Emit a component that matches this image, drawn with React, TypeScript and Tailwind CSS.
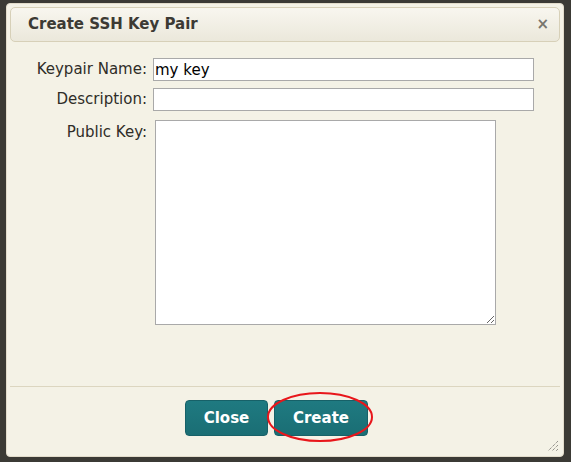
import { useState } from "react";

export default function App() {
  const [name, setName] = useState("my key");

  return (
    <div className="w-[571px] h-[462px] bg-[#3b3a35] pt-[3px] pl-[6px] font-['DejaVu_Sans',sans-serif] overflow-hidden">
      <div className="relative w-[558px] h-[454px] bg-[#f4f2e6] rounded-[4px] border border-[#e2dccb] flex flex-col">
        {/* title bar */}
        <div className="mx-[3px] mt-[3px] h-[35px] rounded-[5px] border border-[#d7d0b8] bg-gradient-to-b from-[#f8f6ef] to-[#ebe8db] flex items-center justify-between pl-[17px] pr-[10px]">
          <h1 className="text-[15px] font-bold text-[#3c3a34]">Create SSH Key Pair</h1>
          <span className="text-[15px] font-bold text-[#77756e] leading-none">×</span>
        </div>

        {/* form */}
        <div className="flex flex-col mt-[16px] text-[15px] text-[#2f2d28]">
          <div className="flex items-center gap-[6px]">
            <label className="w-[140px] text-right">Keypair Name:</label>
            <input
              autoFocus
              value={name}
              onChange={(e) => setName(e.target.value)}
              className="w-[381px] h-[23px] border border-[#a9a9a9] bg-white px-[1px] text-[15px] text-black outline-none caret-black"
            />
          </div>
          <div className="flex items-center gap-[6px] mt-[7px]">
            <label className="w-[140px] text-right">Description:</label>
            <input className="w-[381px] h-[23px] border border-[#a9a9a9] bg-white px-[1px] text-[15px] outline-none" />
          </div>
          <div className="flex items-start gap-[8px] mt-[9px]">
            <label className="w-[140px] text-right pt-[1px]">Public Key:</label>
            <textarea className="w-[341px] h-[205px] border border-[#a9a9a9] bg-white outline-none" />
          </div>
        </div>

        {/* footer */}
        <div className="mt-auto mb-[20px] mx-[3px] border-t border-[#dcd6c0] pt-[13px] flex gap-[6px] pl-[175px]">
          <button className="w-[83px] h-[36px] rounded-[4px] border border-[#176168] bg-gradient-to-b from-[#1f7a81] to-[#1a6e74] text-white text-[15px] font-bold">
            Close
          </button>
          <button className="w-[94px] h-[36px] rounded-[4px] border border-[#176168] bg-gradient-to-b from-[#1f7a81] to-[#1a6e74] text-white text-[15px] font-bold">
            Create
          </button>
        </div>

        {/* red annotation ellipse */}
        <svg className="absolute left-[259px] top-[387px] pointer-events-none" width="108" height="52" viewBox="0 0 108 52">
          <ellipse cx="54" cy="26" rx="52" ry="24" fill="none" stroke="#e8161b" strokeWidth="2" />
        </svg>

        {/* resize grip */}
        <svg className="absolute right-[4px] bottom-[4px]" width="12" height="12" viewBox="0 0 12 12">
          <path d="M11 1L1 11M11 5L5 11M11 9L9 11" stroke="#6e6c66" strokeWidth="1" strokeDasharray="1 1" />
        </svg>
      </div>
    </div>
  );
}
